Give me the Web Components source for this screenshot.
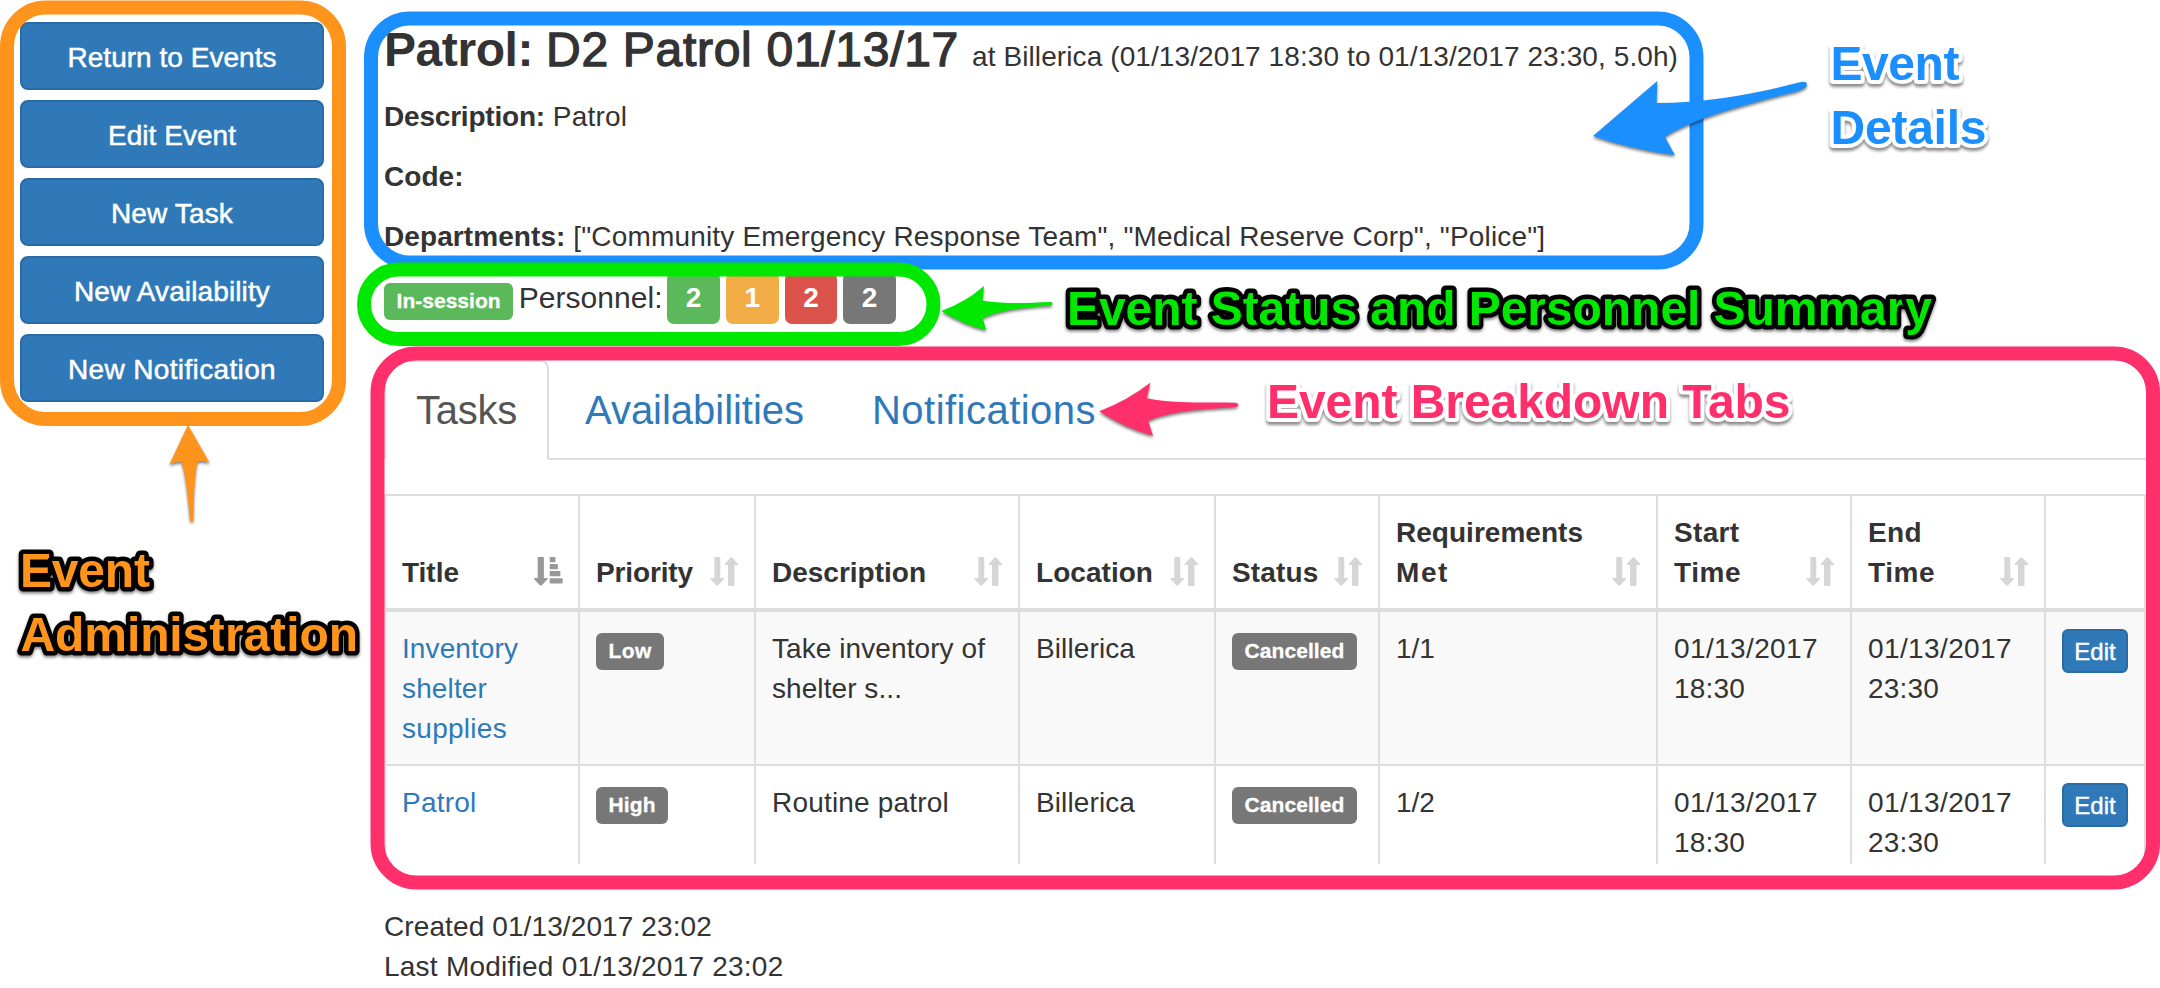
<!DOCTYPE html>
<html lang="en">
<head>
<meta charset="utf-8">
<title>Patrol: D2 Patrol 01/13/17</title>
<style>
html,body{margin:0;padding:0;background:#fff}
body{width:2160px;height:988px;overflow:hidden;font:28px/40px "Liberation Sans",Arial,sans-serif;color:#333}
</style>
</head>
<body>
<event-page></event-page>
<script>
const define = (name, html, setup) => {
  const tpl = document.createElement('template');
  tpl.innerHTML = html;
  customElements.define(name, class extends HTMLElement {
    connectedCallback() {
      if (this.shadowRoot) return;
      this.attachShadow({ mode: 'open' }).appendChild(tpl.content.cloneNode(true));
      if (setup) setup.call(this, this.shadowRoot);
    }
  });
};

/* A run of text whose tracking is adjusted to occupy the width w */
define('fit-text', `<style>:host{display:inline-block;white-space:pre}</style><span><slot></slot></span>`, function (root) {
  const natural = root.querySelector('span').getBoundingClientRect().width;
  const w = parseFloat(this.getAttribute('w'));
  if (w && natural) this.style.letterSpacing = ((w - natural) / this.textContent.length).toFixed(4) + 'px';
});

define('side-button', `<style>
:host{display:block;box-sizing:border-box;height:68px;padding-top:14px;border:2px solid #296ba6;border-radius:8px;background:#2f79b9;color:#fff;text-align:center;-webkit-text-stroke:.5px #fff}
</style><slot></slot>`);

define('edit-button', `<style>
:host{display:block;box-sizing:border-box;width:66px;height:44px;border:2px solid #296ba6;border-radius:6px;background:#2f79b9;color:#fff;text-align:center;font-size:24px;line-height:41px;-webkit-text-stroke:.4px #fff}
</style><slot></slot>`);

define('status-label', `<style>
:host{display:block;box-sizing:border-box;height:37px;padding:0 12.6px;border-radius:6px;background:#777;color:#fff;font:bold 21px/36px "Liberation Sans",Arial,sans-serif;width:max-content;-webkit-text-stroke:.3px #fff}
:host([kind=success]){background:#5bb85b}
</style><slot></slot>`);

define('count-badge', `<style>
:host{display:block;box-sizing:border-box;width:52.8px;height:52px;border-radius:7px;background:#777;color:#fff;font-weight:bold;text-align:center;line-height:52px}
:host([kind=success]){background:#5bb85b}
:host([kind=warning]){background:#f3ad46}
:host([kind=danger]){background:#dc534c}
</style><slot></slot>`);

define('sort-icon', `<style>
:host{display:block;width:29px;height:29px;flex:none}
svg{display:block}
.down,:host([sorted]) .both{display:none}
:host([sorted]) .down{display:block}
</style>
<svg class="both" width="29" height="29" viewBox="0 0 29 29" fill="#d6d6d6"><path d="M5 0h4.600q.7 0 .7.8V21h3.200q1.300.2.3 1.300l-5.600 6q-1 .9-2 0l-5.600-6q-1-1.100.3-1.300h3.400V.8Q4.300 0 5 0z"/><path d="M18.700 29h5q.8 0 .8-.8V8h3.200q1.300-.2.3-1.300l-5.600-6q-1-.9-2 0l-5.600 6q-1 1.100.3 1.300H18v20.200q0 .8.7.8z"/></svg>
<svg class="down" width="29" height="29" viewBox="0 0 29 29" fill="#999"><path d="M4.400 0h4.800q.7 0 .7.8V21h3.200q1.300.2.3 1.300l-5.600 6q-1 .9-2 0l-5.600-6q-1-1.100.3-1.300h3.200V.8q0-.8.7-.8z"/><rect x="15.700" width="5.800" height="5.300" rx=".7"/><rect x="15.700" y="7" width="8.200" height="5.300" rx=".7"/><rect x="15.700" y="14" width="10.700" height="5.300" rx=".7"/><rect x="15.700" y="21.200" width="13" height="5.300" rx=".7"/></svg>`);

define('side-menu', `<style>
:host{display:flex;flex-direction:column;gap:10px;padding-top:22px;width:304px}
</style>
<side-button><fit-text w="209">Return to Events</fit-text></side-button>
<side-button><fit-text w="128">Edit Event</fit-text></side-button>
<side-button><fit-text w="122">New Task</fit-text></side-button>
<side-button><fit-text w="196">New Availability</fit-text></side-button>
<side-button><fit-text w="208">New Notification</fit-text></side-button>`);

define('event-details', `<style>
:host{display:block;height:278px}
h3{margin:0 0 10px;padding-top:20px;height:67px;font-weight:normal;line-height:60px;display:flex;align-items:baseline;gap:13px}
h3 .t{font-size:48px;-webkit-text-stroke:1.300px #333}
h3 b{font-size:48px}
h3 .s{font-size:28px}
p{margin:0 0 20px;display:flex;gap:7.8px}
</style>
<h3><b><fit-text w="149">Patrol:</fit-text></b><fit-text class="t" w="413">D2 Patrol 01/13/17</fit-text><fit-text class="s" w="706">at Billerica (01/13/2017 18:30 to 01/13/2017 23:30, 5.0h)</fit-text></h3>
<p><b><fit-text w="161">Description:</fit-text></b><fit-text w="74.500">Patrol</fit-text></p>
<p><b><fit-text w="79.500">Code:</fit-text></b></p>
<p><b><fit-text w="181.500">Departments:</fit-text></b><fit-text w="972">["Community Emergency Response Team", "Medical Reserve Corp", "Police"]</fit-text></p>`);

define('event-status', `<style>
:host{display:flex;align-items:flex-start;height:82px}
status-label{margin:5px 5.500px 0 0}
.who{font-size:30px}
.counts{display:flex;gap:5.900px;margin:-6px 0 0 4.500px}
</style>
<status-label kind="success"><fit-text w="104">In-session</fit-text></status-label>
<fit-text class="who" w="144">Personnel:</fit-text>
<div class="counts"><count-badge kind="success">2</count-badge><count-badge kind="warning">1</count-badge><count-badge kind="danger">2</count-badge><count-badge>2</count-badge></div>`);

define('event-tabs', `<style>
:host{display:flex;gap:4px;height:98px;border-bottom:2px solid #ddd;font-size:40px;line-height:56px;color:#2f79b9}
div{box-sizing:border-box;height:100px;padding:20px 30px 0;border:2px solid transparent}
.on{color:#555;border-color:#ddd #ddd #fff;background:#fff;border-radius:8px 8px 0 0}
</style>
<div class="on"><fit-text w="101">Tasks</fit-text></div>
<div><fit-text w="219">Availabilities</fit-text></div>
<div><fit-text w="224">Notifications</fit-text></div>`);

define('task-table', `<style>
:host{display:block;margin-top:34px;width:1762px;border-top:2px solid #ddd;box-sizing:border-box}
.row{display:grid;grid-template-columns:194px 176px 264px 196px 164px 278px 194px 194px 102px}
.cell{box-sizing:border-box;border-left:2px solid #ddd;padding:17px 0 0 16px}
.cell:last-child{border-right:2px solid #ddd}
.cell fit-text{display:block}
.head{height:112px;font-weight:bold;border-bottom:4px solid #ddd}
.head .cell{display:flex;justify-content:space-between;align-items:flex-end;padding:0 15px 15px 16px}
.head sort-icon{margin-bottom:7px}
.one{height:152px;background:#f9f9f9;border-bottom:2px solid #ddd}
.two{height:98px}
.link{color:#2f79b9}
status-label{margin-top:4px}
</style>
<div class="row head">
<div class="cell"><fit-text w="57">Title</fit-text><sort-icon sorted></sort-icon></div>
<div class="cell"><fit-text w="97">Priority</fit-text><sort-icon></sort-icon></div>
<div class="cell"><fit-text w="154">Description</fit-text><sort-icon></sort-icon></div>
<div class="cell"><fit-text w="117">Location</fit-text><sort-icon></sort-icon></div>
<div class="cell"><fit-text w="86.500">Status</fit-text><sort-icon></sort-icon></div>
<div class="cell"><div><fit-text w="187">Requirements</fit-text><fit-text w="53">Met</fit-text></div><sort-icon></sort-icon></div>
<div class="cell"><div><fit-text w="65.500">Start</fit-text><fit-text w="67">Time</fit-text></div><sort-icon></sort-icon></div>
<div class="cell"><div><fit-text w="54">End</fit-text><fit-text w="67">Time</fit-text></div><sort-icon></sort-icon></div>
<div class="cell"></div>
</div>
<div class="row one">
<div class="cell link"><fit-text w="116">Inventory</fit-text><fit-text w="85">shelter</fit-text><fit-text w="105">supplies</fit-text></div>
<div class="cell"><status-label><fit-text w="43">Low</fit-text></status-label></div>
<div class="cell"><fit-text w="213">Take inventory of</fit-text><fit-text w="130">shelter s...</fit-text></div>
<div class="cell"><fit-text w="99">Billerica</fit-text></div>
<div class="cell"><status-label><fit-text w="99.800">Cancelled</fit-text></status-label></div>
<div class="cell"><fit-text>1/1</fit-text></div>
<div class="cell"><fit-text w="144">01/13/2017</fit-text><fit-text w="71">18:30</fit-text></div>
<div class="cell"><fit-text w="144">01/13/2017</fit-text><fit-text w="71">23:30</fit-text></div>
<div class="cell"><edit-button>Edit</edit-button></div>
</div>
<div class="row two">
<div class="cell link"><fit-text w="74.500">Patrol</fit-text></div>
<div class="cell"><status-label><fit-text w="47">High</fit-text></status-label></div>
<div class="cell"><fit-text w="177">Routine patrol</fit-text></div>
<div class="cell"><fit-text w="99">Billerica</fit-text></div>
<div class="cell"><status-label><fit-text w="99.800">Cancelled</fit-text></status-label></div>
<div class="cell"><fit-text>1/2</fit-text></div>
<div class="cell"><fit-text w="144">01/13/2017</fit-text><fit-text w="71">18:30</fit-text></div>
<div class="cell"><fit-text w="144">01/13/2017</fit-text><fit-text w="71">23:30</fit-text></div>
<div class="cell"><edit-button>Edit</edit-button></div>
</div>`);

define('record-dates', `<style>:host{display:block;margin-top:43px}fit-text{display:block}</style>
<fit-text w="328">Created 01/13/2017 23:02</fit-text><fit-text w="399.500">Last Modified 01/13/2017 23:02</fit-text>`);

/* Callout frames, arrows and captions drawn over the page */
define('callout-layer', `<style>
:host{position:absolute;left:0;top:0;width:2160px;height:988px;pointer-events:none}
svg{display:block}
rect{fill:none;stroke-width:14}
text{font:bold 48px "Liberation Sans",Arial,sans-serif;paint-order:stroke;stroke-linejoin:round}
.dark{stroke:#000;stroke-width:9;filter:drop-shadow(0 2px 1.500px rgba(0,0,0,.5))}
.light{stroke:#fff;stroke-width:8;filter:drop-shadow(0 3px 1.500px rgba(0,0,0,.45))}
path{filter:drop-shadow(0 2px 1.500px rgba(0,0,0,.5))}
</style>
<svg width="2160" height="988" viewBox="0 0 2160 988">
<rect x="7" y="7.500" width="332" height="411.500" rx="39" stroke="#ff941c"/>
<rect x="371" y="18.500" width="1325.500" height="244" rx="39" stroke="#1c8fff"/>
<rect x="364" y="269.500" width="569.500" height="69.500" rx="34.700" stroke="#00e800"/>
<rect x="377.500" y="353.500" width="1775.500" height="529" rx="39" stroke="#ff2f6b"/>
<path fill="#ff941c" d="M188 425L209.500 462.500Q203 460 197.500 461.500C194 478 194 500 193.300 520.500Q192 522.500 190.200 520.500C188 500 186 475 181.500 461.500Q175 461.500 169.500 464.500Z"/>
<path fill="#1c8fff" d="M1593 136L1657.300 81L1656.700 103C1705 103 1755 94 1801 82Q1809 81 1806 87Q1803 89.500 1795 92C1745 104 1690 120 1665 137L1675 155.300Q1630 149 1593 136Z"/>
<path fill="#00e800" d="M941.300 311Q966 302 984 286L982.600 300.700C1004 304 1027 303 1051 302Q1054 303.500 1051 305.500C1025 307 1001 310 982.600 318.300L986.300 330.300Q964 325 941.300 311Z"/>
<path fill="#ff2f6b" d="M1099.300 411.300Q1128 400 1150.300 382.700L1146.800 398.300C1176 404 1207 402 1236 402.700Q1241 404.500 1236 407C1205 409 1169 411 1148.200 421L1153 435.700Q1124 428 1099.300 411.300Z"/>
<g fill="#ff941c"><text class="dark" x="20" y="586.500" textLength="130">Event</text><text class="dark" x="20.500" y="651" textLength="337.500">Administration</text></g>
<g fill="#1c8fff"><text class="light" x="1830.500" y="80" textLength="129">Event</text><text class="light" x="1830.500" y="144" textLength="156">Details</text></g>
<g fill="#00e800"><text class="dark" x="1067" y="325" textLength="865">Event Status and Personnel Summary</text></g>
<g fill="#ff2f6b"><text class="light" x="1267" y="418" textLength="523.500">Event Breakdown Tabs</text></g>
</svg>`);

define('event-page', `<style>
:host{display:grid;grid-template-columns:304px 1762px;column-gap:60px;padding-left:20px;width:2160px;height:988px;box-sizing:border-box;position:relative}
main{display:block}
</style>
<side-menu></side-menu>
<main><event-details></event-details><event-status></event-status><event-tabs></event-tabs><task-table></task-table><record-dates></record-dates></main>
<callout-layer></callout-layer>`);
</script>
</body>
</html>
